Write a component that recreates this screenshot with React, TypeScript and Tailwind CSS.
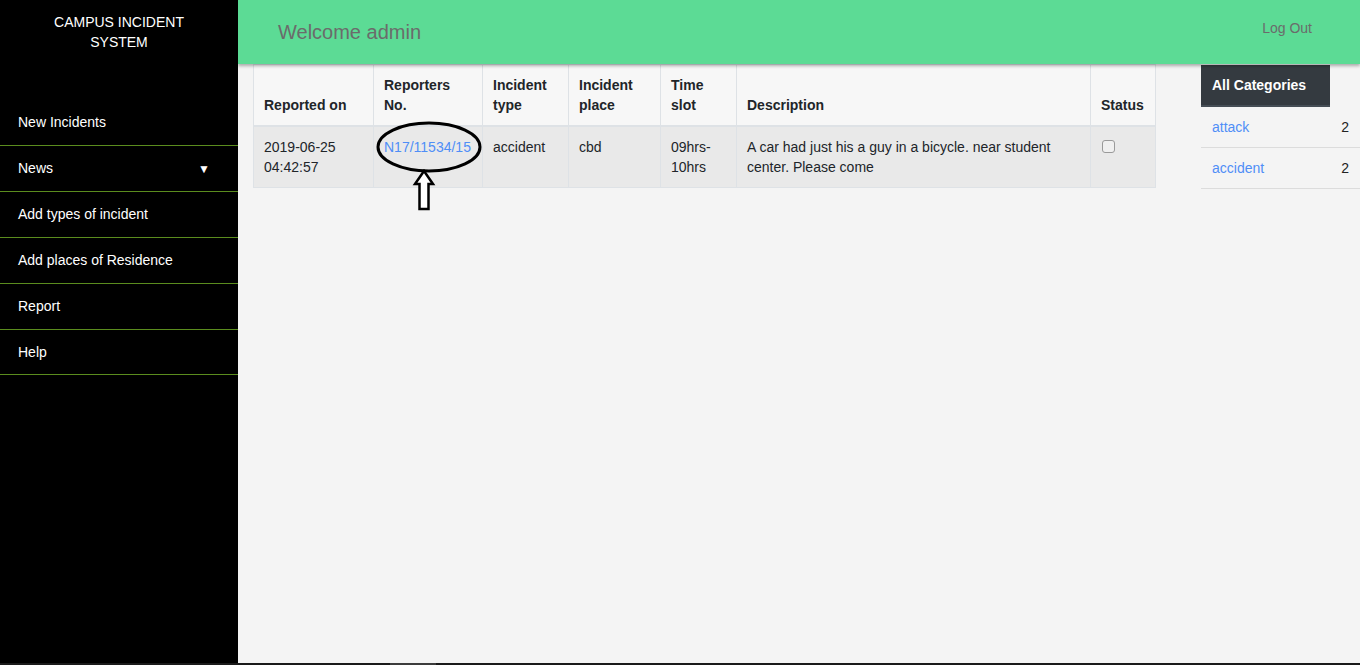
import { ReactNode } from 'react';

const navItems = ['New Incidents', 'News', 'Add types of incident', 'Add places of Residence', 'Report', 'Help'];

const categories = [
  { name: 'attack', count: 2 },
  { name: 'accident', count: 2 },
];

function Th({ children }: { children: ReactNode }) {
  return (
    <th className="border border-[#dee2e6] border-b-2 px-[10px] py-[10px] text-left align-bottom font-bold leading-5">
      {children}
    </th>
  );
}

function Td({ children }: { children: ReactNode }) {
  return <td className="border border-[#dee2e6] px-[10px] py-[10px] align-top leading-5">{children}</td>;
}

export default function App() {
  return (
    <div
      className="relative flex h-[665px] w-[1360px] overflow-hidden text-[14px] text-[#212529]"
      style={{ fontFamily: '"Liberation Sans", Arial, sans-serif' }}
    >
      {/* Sidebar */}
      <aside className="flex w-[238px] shrink-0 flex-col bg-black text-white">
        <div className="h-[99px] pt-[12px] text-center leading-5">
          CAMPUS INCIDENT
          <br />
          SYSTEM
        </div>
        <nav>
          {navItems.map((item, i) => (
            <div
              key={item}
              className={`flex h-[46px] items-center justify-between px-[18px] ${
                i > 0 ? 'border-t border-[#5b8c1e]' : ''
              } ${i === navItems.length - 1 ? 'border-b border-[#5b8c1e]' : ''}`}
            >
              <span>{item}</span>
              {item === 'News' && <span className="mr-[10px] text-[12px]">▼</span>}
            </div>
          ))}
        </nav>
      </aside>

      {/* Main */}
      <main className="flex flex-1 flex-col bg-[#f4f4f4]">
        <header className="relative z-10 flex h-[64px] shrink-0 items-start justify-between bg-[#5cdb95] pl-[40px] pr-[48px] shadow-[0_2px_3px_rgba(0,0,0,0.3)]">
          <h1 className="pt-[20px] text-[20px] leading-6 text-[#6b6b6b]">Welcome admin</h1>
          <a className="pt-[18px] text-[#6b6b6b]">Log Out</a>
        </header>

        <div className="flex flex-1 items-start">
          <div className="ml-[15px] w-[902px]">
            <table className="w-full table-fixed border-collapse">
              <colgroup>
                <col className="w-[120px]" />
                <col className="w-[109px]" />
                <col className="w-[86px]" />
                <col className="w-[92px]" />
                <col className="w-[76px]" />
                <col className="w-[354px]" />
                <col className="w-[65px]" />
              </colgroup>
              <thead className="bg-[#f7f7f7]">
                <tr>
                  <Th>Reported on</Th>
                  <Th>Reporters No.</Th>
                  <Th>Incident type</Th>
                  <Th>Incident place</Th>
                  <Th>Time slot</Th>
                  <Th>Description</Th>
                  <Th>Status</Th>
                </tr>
              </thead>
              <tbody className="bg-[#e9e9e9]">
                <tr>
                  <Td>2019-06-25 04:42:57</Td>
                  <Td>
                    <a className="whitespace-nowrap text-[#4f8ef7]">N17/11534/15</a>
                  </Td>
                  <Td>accident</Td>
                  <Td>cbd</Td>
                  <Td>09hrs-10hrs</Td>
                  <Td>A car had just his a guy in a bicycle. near student center. Please come</Td>
                  <Td>
                    <span className="mt-[3px] ml-px block h-[13px] w-[13px] rounded-[3px] border border-[#9a9a9a] bg-[#f0f0f0]" />
                  </Td>
                </tr>
              </tbody>
            </table>
          </div>

          <div className="ml-[46px] mt-px w-[159px]">
            <div className="flex h-[42px] w-[129px] items-center border-b-2 border-[#454d55] bg-[#343a40] px-[11px] font-bold text-white">
              All Categories
            </div>
            {categories.map((c) => (
              <div
                key={c.name}
                className="flex h-[41px] items-center justify-between border-b border-[#dcdcdc] pl-[11px] pr-[11px] first:border-t"
              >
                <a className="text-[#4f8ef7]">{c.name}</a>
                <span className="text-[#222]">{c.count}</span>
              </div>
            ))}
          </div>
        </div>
      </main>

      {/* bottom scrollbar strip */}
      <div className="absolute bottom-0 left-0 flex h-[2px] w-full bg-[#1a1a1a]">
        <div className="ml-[390px] w-[46px] bg-[#3c3c3c]" />
      </div>

      {/* annotation: circle and arrow */}
      <svg className="pointer-events-none absolute left-0 top-0" width="1360" height="665">
        <ellipse cx="429" cy="147" rx="51" ry="24" fill="none" stroke="#000" strokeWidth="3" />
        <path
          d="M424 171 L433 184 L428.5 184 L428.5 209 L419.5 209 L419.5 184 L415 184 Z"
          fill="#fff"
          stroke="#000"
          strokeWidth="2.5"
          strokeLinejoin="miter"
        />
      </svg>
    </div>
  );
}
